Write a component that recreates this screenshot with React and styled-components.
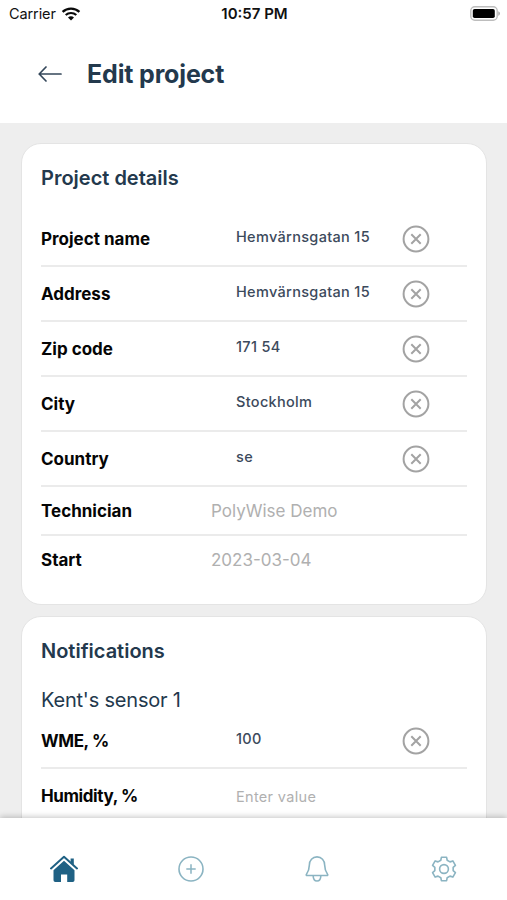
import React from "react";
import styled, { createGlobalStyle } from "styled-components";

const GlobalStyle = createGlobalStyle`
  * {
    box-sizing: border-box;
  }
  body {
    margin: 0;
    background: #eeeeee;
    font-family: Inter, "Liberation Sans", sans-serif;
  }
`;

const Screen = styled.div`
  display: flex;
  flex-direction: column;
  width: 507px;
  height: 900px;
  overflow: hidden;
  background: #eeeeee;
`;

const Header = styled.header`
  flex: none;
  height: 123px;
  background: #ffffff;
`;

const StatusBar = styled.div`
  display: grid;
  grid-template-columns: 1fr auto 1fr;
  align-items: center;
  height: 27px;
  padding: 0 7px 0 9px;
  color: #111111;
`;

const Carrier = styled.div`
  display: flex;
  align-items: center;
  gap: 5px;
  font-size: 14.5px;
  line-height: 27px;
  letter-spacing: -0.1px;
`;

const Clock = styled.div`
  font-size: 15px;
  font-weight: 600;
  line-height: 27px;
`;

const Battery = styled.svg`
  justify-self: end;
  display: block;
`;

const TitleBar = styled.div`
  display: flex;
  align-items: center;
  gap: 25px;
  height: 94px;
  padding-left: 38px;
`;

const Title = styled.h1`
  margin: 0;
  font-size: 25px;
  font-weight: 700;
  line-height: 30px;
  letter-spacing: -0.15px;
  color: #23394d;
`;

const Content = styled.main`
  flex: 1;
  min-height: 0;
  overflow: hidden;
  display: flex;
  flex-direction: column;
  gap: 11px;
  padding: 20px 20px 0 21px;
`;

const Card = styled.section`
  flex: none;
  padding: 19px 19px 21px;
  background: #ffffff;
  border: 1px solid #e4e4e4;
  border-radius: 20px;
`;

const CardTitle = styled.h2`
  margin: 0 0 ${({ $gap }) => $gap}px;
  font-size: 20px;
  font-weight: 600;
  line-height: 30px;
  color: #23394d;
`;

const SensorName = styled.h3`
  margin: 0 0 1px;
  font-size: 20px;
  font-weight: 400;
  line-height: 26px;
  letter-spacing: -0.2px;
  color: #23394d;
`;

const Row = styled.div`
  display: flex;
  align-items: center;
  height: ${({ $height }) => $height || 55}px;
  border-bottom: ${({ $last }) => ($last ? "none" : "2px solid #ebebeb")};
`;

const Label = styled.div`
  width: ${({ $wide }) => ($wide ? 195 : 170)}px;
  font-size: 17px;
  font-weight: 700;
  line-height: 22px;
  letter-spacing: ${({ $tight }) => ($tight ? -0.4 : 0)}px;
  color: #050505;
`;

const Value = styled.div`
  width: 166px;
  padding-bottom: ${({ $empty }) => ($empty ? 0 : 4)}px;
  padding-top: ${({ $empty }) => ($empty ? 2 : 0)}px;
  font-size: 14.5px;
  font-weight: ${({ $empty }) => ($empty ? 400 : 500)};
  line-height: 20px;
  letter-spacing: 0.32px;
  color: ${({ $empty }) => ($empty ? "#b0b0b0" : "#3c4a5c")};
`;

const StaticValue = styled.div`
  font-size: 17px;
  line-height: 22px;
  color: #b0b0b0;
`;

const ClearButton = styled.button`
  display: flex;
  padding: 0;
  border: none;
  background: none;
`;

const BottomNav = styled.nav`
  position: relative;
  flex: none;
  display: grid;
  grid-template-columns: repeat(4, 1fr);
  height: 82px;
  padding-left: 1px;
  background: #ffffff;
  box-shadow: 0 -1px 6px rgba(0, 0, 0, 0.24);
`;

const NavItem = styled.a`
  display: flex;
  justify-content: center;
  padding-top: 37px;
  color: ${({ $active }) => ($active ? "#1f6184" : "#8bb4c2")};
`;

const WifiIcon = () => (
  <svg width="20" height="14" viewBox="0 0 20 14" fill="none" stroke="#0a0a0a">
    <path d="M1.6 4.8C6.2 0.5 13.8 0.5 18.4 4.8" strokeWidth="2.3" />
    <path d="M4.7 8C7.7 5.3 12.3 5.3 15.3 8" strokeWidth="2.2" />
    <path d="M7 10.4C8.8 8.8 11.2 8.8 13 10.4L10 13.5Z" fill="#0a0a0a" stroke="none" />
  </svg>
);

const BatteryIcon = () => (
  <Battery width="30" height="15" viewBox="0 0 30 15">
    <rect x="0.8" y="0.8" width="26.4" height="13.4" rx="4" fill="#ffffff" stroke="#bdbdbd" strokeWidth="1.4" />
    <rect x="2.8" y="2.9" width="22" height="9.2" rx="1.8" fill="#000000" />
    <path d="M28.3 5.2C30.4 6 30.4 9 28.3 9.8Z" fill="#a5a5a5" />
  </Battery>
);

const BackIcon = () => (
  <svg width="24" height="16" viewBox="0 0 24 16" fill="none" stroke="#34475a" strokeWidth="1.7" strokeLinecap="round" strokeLinejoin="round">
    <path d="M23 8H1.2M8 1L1.2 8L8 15" />
  </svg>
);

const ClearIcon = () => (
  <svg width="28" height="28" viewBox="0 0 28 28" fill="none" stroke="#a3a3a3">
    <circle cx="14" cy="14" r="12.4" strokeWidth="2" />
    <path d="M9.3 9.3L18.7 18.7M18.7 9.3L9.3 18.7" strokeWidth="2" />
  </svg>
);

const HomeIcon = () => (
  <svg width="28" height="28" viewBox="0 0 28 28">
    <path d="M1 13.4L14 1.8L27 13.4" fill="none" stroke="currentColor" strokeWidth="2" strokeLinecap="round" strokeLinejoin="round" />
    <path d="M20.6 3.4H23.8V10L20.6 7.2Z" fill="currentColor" />
    <path d="M14 5.8L24.5 15.2V25.2Q24.5 27 22.7 27H17.2V19.4H11V27H5.3Q3.5 27 3.5 25.2V15.2Z" fill="currentColor" />
  </svg>
);

const AddIcon = () => (
  <svg width="28" height="28" viewBox="0 0 28 28" fill="none" stroke="currentColor">
    <circle cx="14" cy="14" r="12" strokeWidth="1.6" />
    <path d="M14 9.3V18.7M9.3 14H18.7" strokeWidth="1.5" />
  </svg>
);

const BellIcon = () => (
  <svg width="28" height="28" viewBox="0 0 28 28" fill="none" stroke="currentColor" strokeWidth="1.6" strokeLinejoin="round">
    <path d="M14 1.9C9.4 1.9 6.4 5.4 6.4 9.8C6.4 14.2 5.4 16.4 3.3 19.6Q3 20.5 4 20.5H24Q25 20.5 24.7 19.6C22.6 16.4 21.6 14.2 21.6 9.8C21.6 5.4 18.6 1.9 14 1.9Z" />
    <path d="M10.2 20.8C10.2 24.6 11.8 26 14 26C16.2 26 17.8 24.6 17.8 20.8" />
  </svg>
);

// six teeth, one every 60 degrees; each corner is [angle offset, radius]
const toothCorners = [
  [-20, 9.3],
  [-12.5, 12],
  [12.5, 12],
  [20, 9.3],
];

const gearPath = [0, 60, 120, 180, 240, 300]
  .flatMap((tooth) =>
    toothCorners.map(([offset, radius]) => {
      const angle = ((tooth + offset) * Math.PI) / 180;
      return `${(14 + radius * Math.sin(angle)).toFixed(2)} ${(14 - radius * Math.cos(angle)).toFixed(2)}`;
    })
  )
  .join("L");

const GearIcon = () => (
  <svg width="28" height="28" viewBox="0 0 28 28" fill="none" stroke="currentColor" strokeWidth="1.6" strokeLinejoin="round">
    <path d={`M${gearPath}Z`} />
    <circle cx="14" cy="14" r="4.4" />
  </svg>
);

const details = [
  { label: "Project name", value: "Hemvärnsgatan 15" },
  { label: "Address", value: "Hemvärnsgatan 15" },
  { label: "Zip code", value: "171 54" },
  { label: "City", value: "Stockholm" },
  { label: "Country", value: "se" },
];

const EditableRow = ({ label, value, placeholder, tight }) => (
  <Row>
    <Label $wide $tight={tight}>
      {label}
    </Label>
    <Value $empty={!value}>{value || placeholder}</Value>
    {value && (
      <ClearButton aria-label={`Clear ${label}`}>
        <ClearIcon />
      </ClearButton>
    )}
  </Row>
);

const App = () => {
  return (
    <>
      <GlobalStyle />
      <Screen>
        <Header>
          <StatusBar>
            <Carrier>
              Carrier
              <WifiIcon />
            </Carrier>
            <Clock>10:57 PM</Clock>
            <BatteryIcon />
          </StatusBar>
          <TitleBar>
            <BackIcon />
            <Title>Edit project</Title>
          </TitleBar>
        </Header>
        <Content>
          <Card>
            <CardTitle $gap={19}>Project details</CardTitle>
            {details.map((item) => (
              <EditableRow key={item.label} {...item} />
            ))}
            <Row $height={49}>
              <Label>Technician</Label>
              <StaticValue>PolyWise Demo</StaticValue>
            </Row>
            <Row $height={47} $last>
              <Label>Start</Label>
              <StaticValue>2023-03-04</StaticValue>
            </Row>
          </Card>
          <Card>
            <CardTitle $gap={21}>Notifications</CardTitle>
            <SensorName>Kent's sensor 1</SensorName>
            <EditableRow label="WME, %" value="100" tight />
            <EditableRow label="Humidity, %" placeholder="Enter value" tight />
          </Card>
        </Content>
        <BottomNav>
          <NavItem $active>
            <HomeIcon />
          </NavItem>
          <NavItem>
            <AddIcon />
          </NavItem>
          <NavItem>
            <BellIcon />
          </NavItem>
          <NavItem>
            <GearIcon />
          </NavItem>
        </BottomNav>
      </Screen>
    </>
  );
};

export default App;
